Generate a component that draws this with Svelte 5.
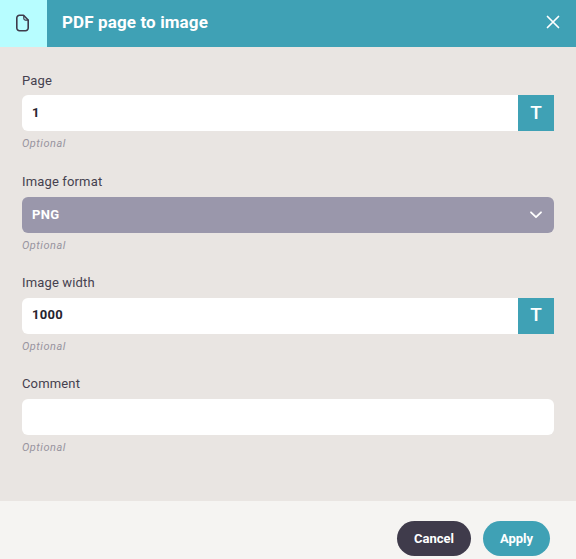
<script>
  const fields = [
    { label: 'Page', value: '1', kind: 'text' },
    { label: 'Image format', value: 'PNG', kind: 'select' },
    { label: 'Image width', value: '1000', kind: 'text' },
    { label: 'Comment', value: '', kind: 'plain' }
  ];
</script>

<div class="dialog">
  <header class="head">
    <div class="icon-box">
      <svg width="18" height="20" viewBox="0 0 18 20" fill="none" stroke="#3f3b4b" stroke-width="1.6" stroke-linejoin="round" stroke-linecap="round">
        <path d="M5.5 1.3h4l4.7 4.7v8a2.7 2.7 0 0 1-2.7 2.7h-6A2.7 2.7 0 0 1 2.8 14V4a2.7 2.7 0 0 1 2.7-2.7z" />
        <path d="M9.8 1.6v3a1.5 1.5 0 0 0 1.5 1.5h2.7" stroke-width="1.2" />
      </svg>
    </div>
    <div class="title">PDF page to image</div>
    <button class="close" aria-label="Close">
      <svg width="14" height="14" viewBox="0 0 14 14" stroke="#fff" stroke-width="1.7" stroke-linecap="round">
        <path d="M1.5 1.5l11 11M12.5 1.5l-11 11" />
      </svg>
    </button>
  </header>

  <main class="body">
    {#each fields as f}
      <div class="field">
        <div class="label">{f.label}</div>
        {#if f.kind === 'select'}
          <div class="select">
            <span class="sel-value">{f.value}</span>
            <svg width="12" height="8" viewBox="0 0 12 8" fill="none" stroke="#fff" stroke-width="1.8" stroke-linecap="round" stroke-linejoin="round">
              <path d="M1 1.3L6 6.2l5-4.9" />
            </svg>
          </div>
        {:else}
          <div class="input-row">
            <div class="input" class:full={f.kind === 'plain'}>{f.value}</div>
            {#if f.kind === 'text'}
              <div class="t-btn">T</div>
            {/if}
          </div>
        {/if}
        <div class="hint">Optional</div>
      </div>
    {/each}
  </main>

  <footer class="foot">
    <button class="btn cancel">Cancel</button>
    <button class="btn apply">Apply</button>
  </footer>
</div>

<style>
  :global(body) {
    margin: 0;
    background: #f5f4f2;
  }
  .dialog {
    width: 576px;
    height: 559px;
    display: flex;
    flex-direction: column;
    font-family: Roboto, sans-serif;
    overflow: hidden;
  }
  .head {
    height: 47px;
    flex: none;
    display: flex;
    align-items: center;
    background: #3fa1b5;
  }
  .icon-box {
    width: 47px;
    height: 47px;
    background: #b7fdff;
    display: flex;
    align-items: center;
    justify-content: center;
    padding-right: 1px;
    box-sizing: border-box;
  }
  .title {
    margin-left: 15px;
    margin-bottom: 4px;
    flex: 1;
    color: #fff;
    font-size: 17px;
    font-weight: 700;
    letter-spacing: 0.12px;
  }
  .close {
    all: unset;
    display: flex;
    margin-right: 16px;
    margin-bottom: 3px;
  }
  .body {
    flex: 1;
    background: #e9e5e2;
    padding: 26px 22px 0;
    display: flex;
    flex-direction: column;
    gap: 22.65px;
  }
  .field {
    display: flex;
    flex-direction: column;
  }
  .label {
    font-size: 13px;
    line-height: 16px;
    letter-spacing: 0.15px;
    color: #45414f;
    margin-bottom: 6.45px;
  }
  .input-row {
    display: flex;
    height: 36px;
  }
  .input {
    flex: 1;
    background: #fff;
    border-radius: 6px 0 0 6px;
    padding-left: 10px;
    padding-top: 0.2px;
    font-size: 13px;
    font-weight: 700;
    line-height: 34.6px;
    letter-spacing: 0.3px;
    color: #26242e;
  }
  .input.full {
    border-radius: 6px;
  }
  .t-btn {
    width: 36px;
    background: #3fa1b5;
    color: #fff;
    padding-top: 0.2px;
    font-size: 19px;
    font-weight: 500;
    line-height: 33px;
    text-align: center;
  }
  .select {
    height: 36px;
    background: #9a97ab;
    border-radius: 6px;
    display: flex;
    align-items: center;
    justify-content: space-between;
    padding: 0 12px 0 10px;
    color: #fff;
    font-size: 13px;
    font-weight: 700;
    letter-spacing: 0.3px;
  }
  .sel-value {
    margin-bottom: 1px;
  }
  .hint {
    margin-top: 6px;
    font-size: 11px;
    line-height: 14px;
    font-style: italic;
    letter-spacing: 0.5px;
    color: #98949f;
  }
  .foot {
    height: 58px;
    flex: none;
    box-sizing: border-box;
    background: #f5f4f2;
    display: flex;
    justify-content: flex-end;
    align-items: flex-start;
    gap: 12px;
    padding: 20px 26px 0 0;
  }
  .btn {
    all: unset;
    height: 35px;
    border-radius: 18px;
    color: #fff;
    font-size: 13px;
    font-weight: 700;
    line-height: 33px;
    text-align: center;
  }
  .cancel {
    width: 74px;
    background: #3f3b4b;
  }
  .apply {
    width: 67px;
    background: #3fa1b5;
  }
</style>
